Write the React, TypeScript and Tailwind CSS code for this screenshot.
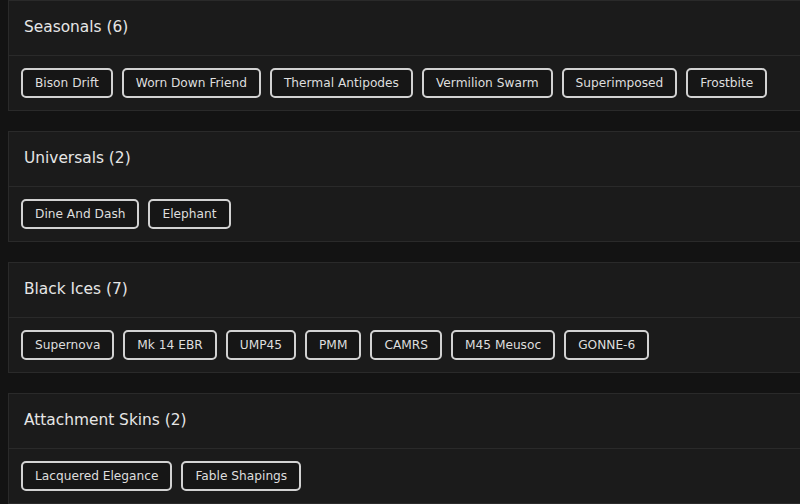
import React from 'react';

type Section = {
  title: string;
  items: string[];
};

const sections: Section[] = [
  {
    title: 'Seasonals',
    items: ['Bison Drift', 'Worn Down Friend', 'Thermal Antipodes', 'Vermilion Swarm', 'Superimposed', 'Frostbite'],
  },
  { title: 'Universals', items: ['Dine And Dash', 'Elephant'] },
  {
    title: 'Black Ices',
    items: ['Supernova', 'Mk 14 EBR', 'UMP45', 'PMM', 'CAMRS', 'M45 Meusoc', 'GONNE-6'],
  },
  { title: 'Attachment Skins', items: ['Lacquered Elegance', 'Fable Shapings'] },
];

const SkinCard: React.FC<{ section: Section }> = ({ section }) => (
  <div className="ml-2 w-[800px] shrink-0 border border-[#2a2a2a] bg-[#1b1b1b]">
    <div className="flex h-[54px] items-center px-[15px]">
      <h2 className="text-[15.4px] font-medium text-[#e6e6e6]">
        {section.title} ({section.items.length})
      </h2>
    </div>
    <div className="flex flex-wrap gap-[9px] border-t border-[#2a2a2a] px-3 pt-3 pb-3">
      {section.items.map((item) => (
        <span
          key={item}
          className="flex h-[30px] items-center rounded-[5px] border-2 border-[#d2d2d2] bg-[#161616] px-3 text-[12.2px] text-[#dedede]"
        >
          {item}
        </span>
      ))}
    </div>
  </div>
);

export default function App() {
  return (
    <div
      className="flex h-[504px] w-[800px] flex-col gap-[20px] overflow-hidden bg-[#131313]"
      style={{ fontFamily: '"DejaVu Sans", "Noto Sans", sans-serif' }}
    >
      {sections.map((s) => (
        <SkinCard key={s.title} section={s} />
      ))}
    </div>
  );
}
